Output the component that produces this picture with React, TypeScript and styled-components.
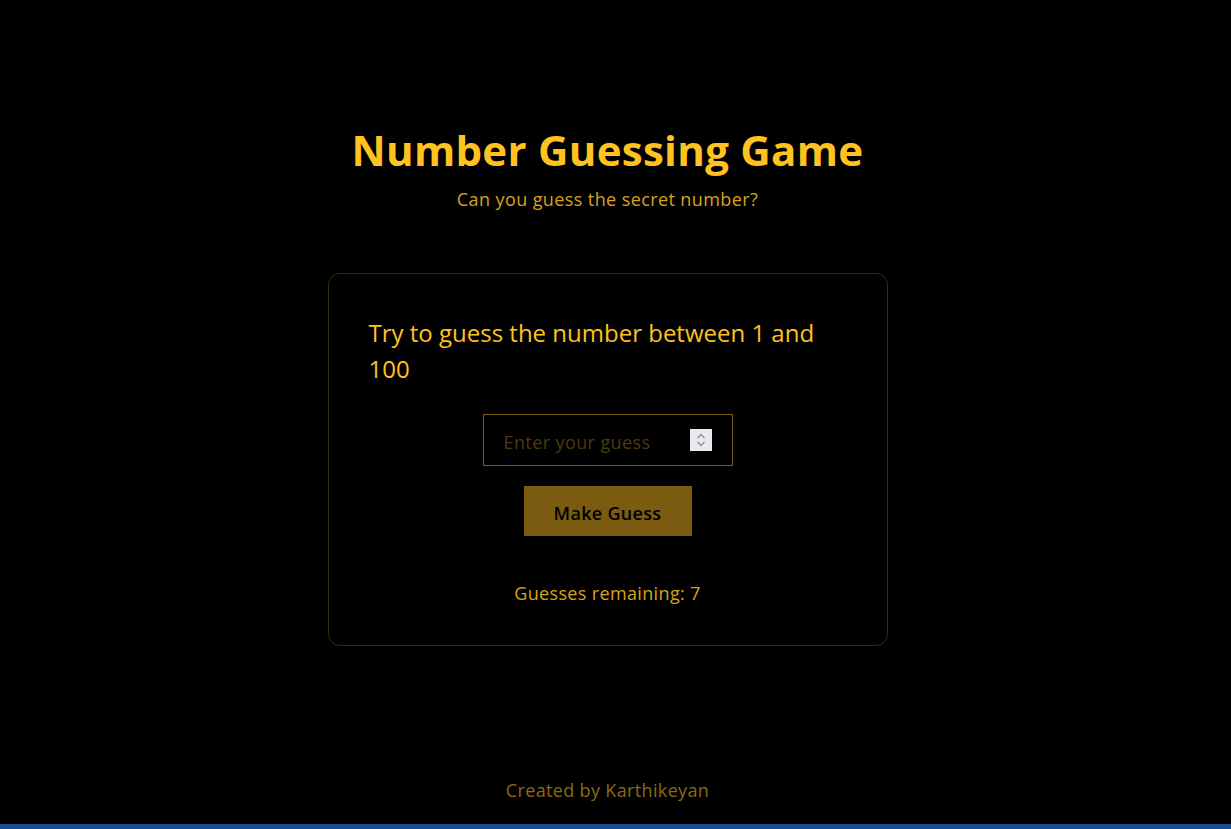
import React from "react";
import styled, { createGlobalStyle } from "styled-components";

const GlobalStyle = createGlobalStyle`
  html, body { margin: 0; padding: 0; background: #000; }
  body { font-family: "Open Sans", "Noto Sans", sans-serif; }
  * { box-sizing: border-box; }
`;

const Page = styled.div`
  min-height: 100vh;
  display: flex;
  flex-direction: column;
  background: #000;
`;

const Main = styled.main`
  flex: 1;
  display: flex;
  flex-direction: column;
  align-items: center;
  padding: 122px 16px 0 0;
`;

const Title = styled.h1`
  margin: 0;
  font-size: 42px;
  line-height: 56px;
  font-weight: 700;
  color: #ffc21f;
  letter-spacing: 0.3px;
`;

const Subtitle = styled.p`
  margin: 8px 0 0;
  font-size: 18px;
  line-height: 27px;
  color: #d9a21a;
  letter-spacing: 0.4px;
`;

const Card = styled.section`
  margin-top: 60px;
  width: 560px;
  border: 1px solid #3a2c07;
  border-radius: 12px;
  padding: 41px 40px 38px;
  display: flex;
  flex-direction: column;
  align-items: center;
`;

const Prompt = styled.h2`
  margin: 0;
  align-self: stretch;
  font-size: 24px;
  line-height: 36px;
  font-weight: 400;
  color: #ffc21f;
`;

const InputWrap = styled.div`
  position: relative;
  margin-top: 27px;
  width: 250px;
  height: 52px;
`;

const GuessInput = styled.input`
  width: 100%;
  height: 100%;
  background: #000;
  border: 1px solid #7a5b12;
  padding: 3px 20px 0;
  font-family: inherit;
  font-size: 18px;
  color: #ffc21f;
  outline: none;
  letter-spacing: 0.4px;
  &::placeholder { color: #4c3a0d; }
`;

const Spinner = styled.div`
  position: absolute;
  right: 21px;
  top: 15px;
  width: 22px;
  height: 22px;
  background: #e9e9ef;
  display: flex;
  align-items: center;
  justify-content: center;
`;

const Button = styled.button`
  margin-top: 20px;
  width: 168px;
  height: 50px;
  border: none;
  padding: 3px 0 0;
  background: #7a5b10;
  color: #000;
  font-family: inherit;
  font-size: 18px;
  font-weight: 600;
  letter-spacing: 0.3px;
  cursor: pointer;
`;

const Remaining = styled.p`
  margin: 44px 0 0;
  font-size: 18px;
  line-height: 27px;
  color: #d9a21a;
  letter-spacing: 0.35px;
`;

const Footer = styled.footer`
  padding: 0 16px 20px 0;
  text-align: center;
  font-size: 18px;
  line-height: 27px;
  color: #8c6a14;
  letter-spacing: 0.35px;
`;

const Bar = styled.div`
  height: 5px;
  background: #1d4c8c;
`;

export default function App() {
  return (
    <>
      <GlobalStyle />
      <Page>
        <Main>
          <Title>Number Guessing Game</Title>
          <Subtitle>Can you guess the secret number?</Subtitle>
          <Card>
            <Prompt>Try to guess the number between 1 and 100</Prompt>
            <InputWrap>
              <GuessInput type="text" inputMode="numeric" placeholder="Enter your guess" />
              <Spinner>
                <svg width="12" height="16" viewBox="0 0 12 16" fill="none" stroke="#8e8e96" strokeWidth="1.4">
                  <path d="M2.5 6 L6 2.5 L9.5 6" />
                  <path d="M2.5 10 L6 13.5 L9.5 10" />
                </svg>
              </Spinner>
            </InputWrap>
            <Button>Make Guess</Button>
            <Remaining>Guesses remaining: 7</Remaining>
          </Card>
        </Main>
        <Footer>Created by Karthikeyan</Footer>
        <Bar />
      </Page>
    </>
  );
}
